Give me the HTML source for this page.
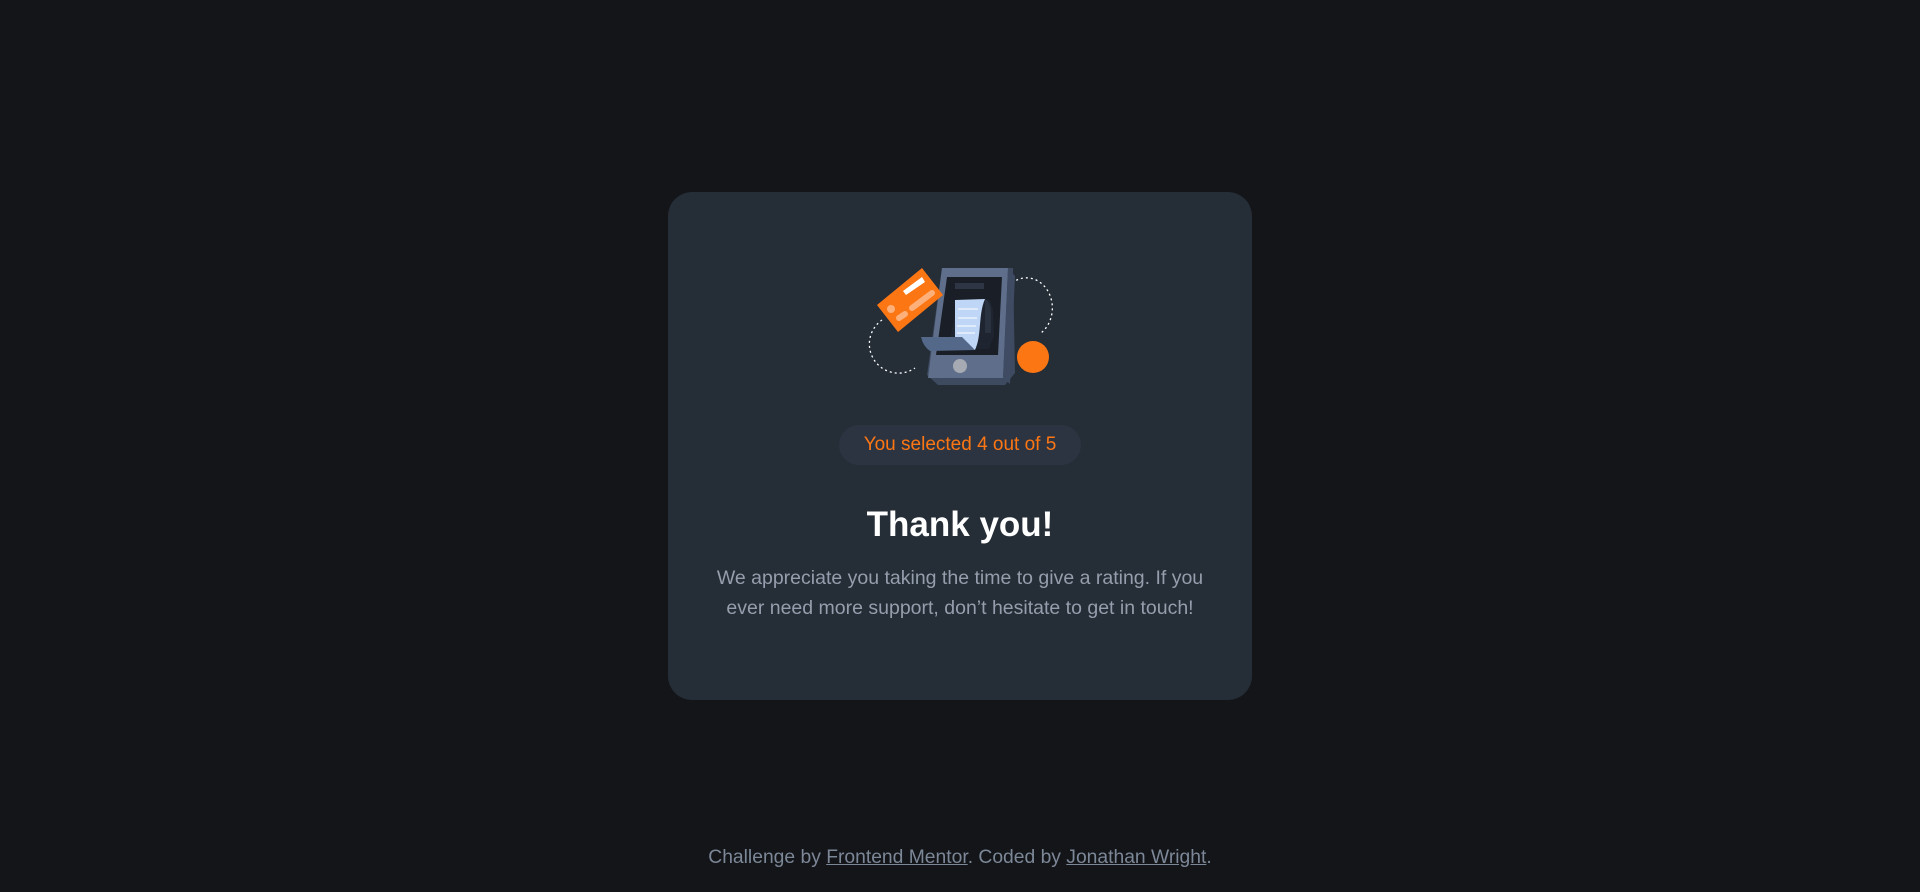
<!DOCTYPE html>
<html><head><meta charset="utf-8"><style>
html,body{margin:0;padding:0;width:1920px;height:892px;background:#131518;overflow:hidden;font-family:"Liberation Sans",sans-serif;}
.card{position:absolute;left:668px;top:192px;width:584px;height:508px;background:#252d37;border-radius:24px;}
.pill{position:absolute;left:839px;top:425px;width:242px;height:40px;border-radius:20px;background:#2c3441;color:#fc7614;font-size:19px;line-height:40px;text-align:center;}
h1{position:absolute;left:668px;width:584px;top:503px;margin:0;text-align:center;color:#fff;font-size:35px;font-weight:bold;line-height:44px;}
p{position:absolute;left:610px;width:700px;top:563px;margin:0;text-align:center;color:#959eac;font-size:19.5px;line-height:30px;}
.foot{position:absolute;left:0;width:1920px;top:846px;text-align:center;color:#7c8798;font-size:19.3px;line-height:24px;}
.foot a{color:#7c8798;text-decoration:underline;}
svg{position:absolute;left:860px;top:260px;}
</style></head><body>
<div class="card"></div>
<svg width="200" height="130" viewBox="860 260 200 130">
 <path d="M882 320 A27 27 0 0 0 915 368" fill="none" stroke="#fff" stroke-width="1.3" stroke-dasharray="2 3"/>
 <path d="M1012 283 A24 28 0 0 1 1041 333" fill="none" stroke="#fff" stroke-width="1.3" stroke-dasharray="2 3"/>
 <polygon points="942,268 1013,268 1015,373 1005,385 938,385 927,375" fill="#3d4a60"/>
 <polygon points="942,268 1008,268 1003,378 928,378" fill="#5f6f8b"/>
 <polygon points="1008,268 1015,276 1010,384 1003,378" fill="#3f4b62"/>
 <polygon points="947,277 1002,277 998,355 936,355" fill="#1a1f27"/>
 <rect x="955" y="283" width="29" height="6" fill="#2e3646"/>
 <circle cx="960" cy="366" r="7" fill="#a5aab3"/>
 <path d="M958 300 L990 300 L993 310 L994 335 L989 349 L948 349 Z" fill="#1f2530"/>
 <path d="M955 300 L985 299 C978 315 982 335 975 350 L955 342 Z" fill="#bfd6f7"/>
 <path d="M985 299 Q992 302 991 320 L991 333 L985 333 Z" fill="#2a3240"/>
 <g stroke="#fff" stroke-width="1"><line x1="958" y1="309" x2="978" y2="309"/><line x1="958" y1="318" x2="977" y2="318"/><line x1="957" y1="326" x2="976" y2="326"/><line x1="957" y1="333" x2="975" y2="333"/></g>
 <path d="M921 337 L962 337 L975 350 L930 351 Q923 346 921 337 Z" fill="#54698a"/>
 <polygon points="877,305 922,268 943,295 898,332" fill="#fc7614"/>
 <polygon points="903,291 922,277 925,282 906,295" fill="#fff"/>
 <circle cx="891" cy="309" r="4" fill="#fdb07a"/>
 <line x1="912" y1="308" x2="932" y2="293" stroke="#fdb07a" stroke-width="6" stroke-linecap="round"/>
 <line x1="899" y1="318" x2="905" y2="314" stroke="#fdb07a" stroke-width="6" stroke-linecap="round"/>
 <circle cx="1033" cy="357" r="16" fill="#fc7614"/>
</svg>
<div class="pill">You selected 4 out of 5</div>
<h1>Thank you!</h1>
<p>We appreciate you taking the time to give a rating. If you<br>ever need more support, don’t hesitate to get in touch!</p>
<div class="foot">Challenge by <a>Frontend Mentor</a>. Coded by <a>Jonathan Wright</a>.</div>
</body></html>
